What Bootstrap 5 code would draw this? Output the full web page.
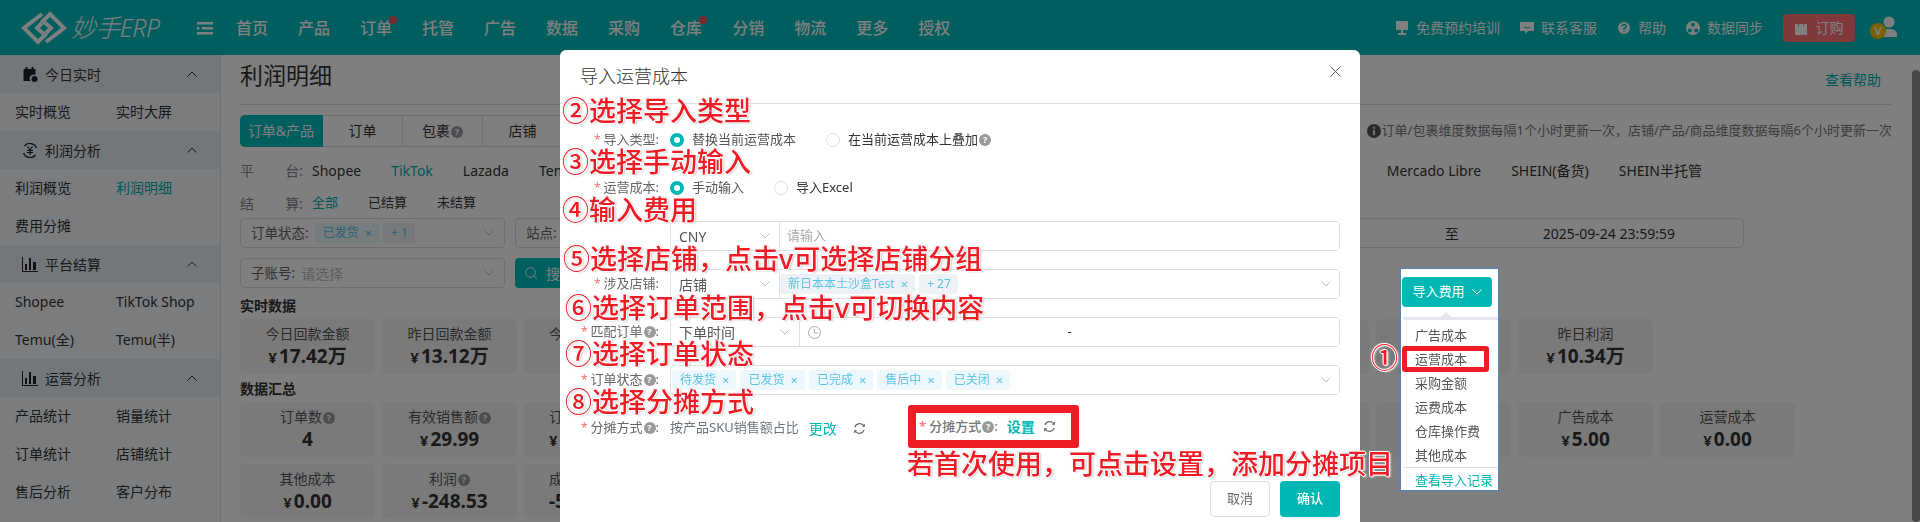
<!DOCTYPE html>
<html lang="zh-CN">
<head>
<meta charset="utf-8">
<title>利润明细</title>
<link href="https://cdn.jsdelivr.net/npm/bootstrap@5.3.0/dist/css/bootstrap.min.css" rel="stylesheet">
<style>
html,body{height:522px;overflow:hidden}
body{font-family:"Noto Sans","Noto Sans CJK SC",sans-serif;font-size:14px;color:#333;background:#fff}
.ms-top{height:55px;background:#00bcbc;color:#fff;padding:0}
.ms-logo{width:48px;height:34px;margin-left:20px}
.ms-logotext{font-size:25px;font-style:italic;margin-left:3px;font-weight:300;width:90px;line-height:1;white-space:nowrap;letter-spacing:-.6px}
.ms-burger{width:16px;height:14px;margin-left:36px}
.ms-menu{gap:30px;margin-left:23px;font-size:16px;font-weight:500}
.ms-menu span{position:relative}
.ms-dot::after{content:"";position:absolute;right:-5px;top:0;width:8px;height:8px;border-radius:50%;background:#f5545c}
.ms-tools{font-size:14px}
.ms-tool{display:flex;align-items:center;gap:7px;margin-right:20px}
.ms-tool svg{width:14px;height:14px}
.ms-buy{width:72px;height:28px;background:#ff7378;border-radius:4px;color:#fff;font-size:14px;gap:9px}
.ms-user{width:27px;height:24px;position:relative;margin:0 23px 0 15px}
.ms-vip{position:absolute;left:0;top:7px;width:16px;height:16px;border-radius:50%;background:#f6c300;color:#fff;font-size:11px;font-weight:700;line-height:16px;text-align:center}
.ms-wrap{height:467px}
.ms-side{width:221px;flex:none;background:#f6f8fb;border-right:1px solid #ddd;height:467px;overflow:hidden}
.ms-group{height:38px;background:#e9eef4;padding:0 23px 0 22px;gap:7px;font-size:14px}
.ms-group svg.ico{width:16px;height:15px}
.ms-chev{margin-left:auto;width:10px;height:6px}
.ms-links{display:grid;grid-template-columns:101px 100px;padding-left:15px}
.ms-links div{height:38px;line-height:38px;white-space:nowrap}
.ms-on,.ms-teal{color:#00aeae}
.ms-main{margin-left:19px;width:1652px;flex:none}
.ms-title{height:50px;border-bottom:1px solid #ddd;margin-bottom:10px}
.ms-title h1{font-size:23px;font-weight:400;margin:0;padding-top:7px}
.ms-help{padding:14px 11px 0 0}
.ms-tabs{height:32px}
.ms-tab{width:80px;height:32px;border:1px solid #ddd;border-left:0;line-height:30px;text-align:center;font-size:14px}
.ms-tab:first-child{background:#00bcbc;color:#fff;border-color:#00bcbc;border-radius:5px 0 0 5px;width:83px}
.ms-note{color:#777;margin-left:auto;font-size:13px}
.ms-info{width:14px;height:14px;margin-right:1px}
.ms-plat{height:32px;margin-top:7px;align-items:center}
.ms-lab{width:72px;color:#888;display:flex;justify-content:space-between;padding-right:9px;flex:none;font-size:14px}
.ms-plat a{margin-right:30px;color:inherit;text-decoration:none}
.ms-plat a.ms-teal{color:#00aeae}
.ms-rightplat{margin-left:auto;padding-right:160px;display:flex}
.ms-settle{height:26px;margin-top:4px;font-size:13px;align-items:center}
.ms-settle .ms-i{margin-right:30px}
.ms-filter{height:30px;border:1px solid #ddd;border-radius:4px;display:flex;align-items:center;padding:0 10px;width:265px;flex:none;background:#fff;white-space:nowrap}
.ms-flab{color:#666;margin-right:6px;font-size:13.500px}
.ms-fchev{width:10px;height:6px;margin-left:auto;flex:none}
.ms-ftags{gap:4px}
.ms-tag{background:#ecf8fc;color:#5cc3e4;font-size:12px;height:20px;line-height:20px;padding:0 7px 0 8px;border-radius:3px;white-space:nowrap;display:inline-flex;gap:6px}
.ms-tag u{text-decoration:none;font-size:13px}
.ms-tag.ms-gray{background:#eef1f5}
.ms-fdate{flex:1;margin-right:148px;justify-content:flex-end;padding-right:68px;width:auto;overflow:hidden}
.ms-fdate .ms-gapa{margin:0 84px 0 86px}
.ms-row1{gap:10px;margin-top:2px}
.ms-row2{gap:10px;margin-top:10px}
.ms-search{width:100px;height:30px;background:#00bcbc;color:#fff;border-radius:4px;display:flex;align-items:center;padding-left:10px;gap:9px}
.ms-h{font-weight:700;font-size:14px;height:20px;line-height:20px}
.ms-h1{margin-top:8px;margin-bottom:3px}
.ms-h2{margin-top:5px;margin-bottom:3px}
.ms-cards{display:grid;grid-template-columns:repeat(11,135px);column-gap:7px}
.ms-next{margin-top:7px}
.ms-card{height:55px;background:#f5f5f5;border-radius:5px;text-align:center;padding-top:5px;white-space:nowrap;overflow:hidden}
.ms-card b{display:block;font-size:19px;line-height:24px;color:#333}
.ms-card i{font-style:normal;font-size:15px;margin-right:2px}
.ms-ct{color:#555;line-height:20px;font-size:14px}
.ms-card.ms-cut{text-align:left;padding-left:25px}
.ms-q{display:inline-flex;width:12px;height:12px;border-radius:50%;background:#999;color:#fff;font-size:9px;font-weight:700;align-items:center;justify-content:center;vertical-align:1px;line-height:1;margin-left:1px}
.ms-scroll{position:absolute;left:1912px;top:15px;width:8px;height:452px;background:#919191;border-radius:4px}
.ms-mask{position:fixed;inset:0;background:rgba(0,0,0,.5);z-index:10}
.ms-modal{position:absolute;left:560px;top:50px;width:800px;height:520px;z-index:20;border:0;border-radius:6px;font-size:13px;background:#fff}
.ms-modal .modal-header{height:54px;padding:0 20px;border-bottom:1px solid #dcdfe6;align-items:center}
.ms-modal .modal-title{font-size:18px;font-weight:300;color:#333;margin-top:0;line-height:1.5}
.ms-x{width:11px;height:11px;margin-top:-10px;margin-right:-1px}
.ms-modal .modal-body{padding:21px 20px 0;flex:none;height:377px}
.ms-frow{height:30px;margin-bottom:18px;display:flex;align-items:center}
.ms-flabel{width:90px;flex:none;text-align:right;padding-right:11px;color:#666;white-space:nowrap}
.ms-flabel em{color:#f56c6c;font-style:normal;margin-right:3px;font-size:12px}
.ms-radio{width:14px;height:14px;border-radius:50%;border:1px solid #dcdfe6;display:inline-block;margin-right:8px;background:#fff;flex:none}
.ms-radio.ms-chk{border:4px solid #00b7b3}
.ms-rtxt{margin-right:30px;color:#555}
.ms-box{flex:1;height:30px;border:1px solid #dcdfe6;border-radius:4px;display:flex;align-items:center;background:#fff;min-width:0}
.ms-boxtags{padding-left:1px}
.ms-sel{height:28px;display:flex;align-items:center;padding:0 9px 0 8px;border-right:1px solid #dcdfe6;flex:none;color:#555;font-size:14px}
.ms-sel.ms-s1{width:109px}
.ms-sel.ms-s2{width:129px}
.ms-ph{color:#aaa;padding-left:7px}
.ms-dash{flex:1;text-align:center;padding-right:21px}
.ms-change{color:#00b7b3;font-size:14px;margin-left:10px}
.ms-modal .modal-footer{border:0;padding:0 20px;gap:10px;justify-content:flex-end;flex-wrap:nowrap}
.ms-modal .modal-footer .btn{width:60px;height:36px;margin:0;font-size:13px;padding:0;border-radius:4px}
.ms-cancel{border:1px solid #dcdfe6;color:#666;background:#fff}
.ms-ok{background:#00b7b3;color:#fff;border:0;font-weight:500}
.ms-note-a{position:absolute;z-index:30;font-size:27px;line-height:28px;font-weight:500;color:#ee1c25;white-space:nowrap;
  text-shadow:1px 0 #fff,-1px 0 #fff,0 1px #fff,0 -1px #fff,1px 1px 1px #ddd,-1px -1px 1px #ddd,2px 1px 2px #ccc}
.ms-redbox{position:absolute;z-index:30;border:8px solid #ee1c25;border-radius:3px;background:#fff;left:908px;top:405px;width:171px;height:43px;display:flex;align-items:center;padding-left:3px;color:#777;font-weight:500;white-space:nowrap;font-size:13px}
.ms-redbox em{color:#f56c6c;font-style:normal;margin-right:3px}
.ms-redbox strong{color:#00b7b3;font-weight:600;font-size:14px;margin-left:9px}
.ms-pop{position:absolute;z-index:25;left:1401px;top:269px;width:97px;height:221px;background:#fff;box-shadow:0 0 1px 1px #5b82b8;padding-top:8px;overflow:hidden;font-size:13px;color:#555}
.ms-popbtn{width:90px;height:30px;margin-left:1px;background:#00b7b3;color:#fff;border:0;border-radius:4px;font-size:13px;padding:0;display:flex;align-items:center;justify-content:center;gap:7px}
.ms-popmenu{margin:10px 0 0 2px;border-top:3px solid #e4e7ed;padding:3px 0 0;position:relative}
.ms-popmenu::before{content:"";position:absolute;left:38px;top:-8px;border:5px solid transparent;border-top:0;border-bottom-color:#e4e7ed}
.ms-popmenu div{height:24px;line-height:24px;padding-left:12px;white-space:nowrap}
.ms-popmenu .ms-last{border-top:1px solid #dcdfe6;color:#00b7b3}
.ms-redpop{position:absolute;z-index:30;left:1402px;top:346px;width:87px;height:26px;border:5px solid #ee1c25;border-radius:3px}
</style>
</head>
<body>
<svg width="0" height="0" class="position-absolute">
  <symbol id="chev" viewBox="0 0 10 6"><path d="M.5.5 5 5 9.500.500" fill="none" stroke="#bbb" stroke-width="1"/></symbol>
  <symbol id="up" viewBox="0 0 10 6"><path d="M.5 5.500 5 1l4.500 4.500" fill="none" stroke="#333" stroke-width="1"/></symbol>
  <symbol id="bars" viewBox="0 0 16 15"><path d="M1 0v14h15v1H0V0zM3 7h2v6H3zM7 1h2v12H7zM11 5h3v8h-3z" fill="#222"/></symbol>
  <symbol id="refresh" viewBox="0 0 14 14"><path d="M2 5.500A5.500 5.500 0 0 1 12 4.500M12 8.500A5.500 5.500 0 0 1 2 9.500" fill="none" stroke="#666" stroke-width="1.300"/><path d="M12.800 1.500v3.500H9.500zM1.200 12.500V9h3.300z" fill="#666"/></symbol>
</svg>

<nav class="navbar ms-top flex-nowrap justify-content-start align-items-center">
  <svg class="ms-logo" viewBox="0 0 48 34"><g fill="none" stroke="#fff" stroke-width="4"><path id="lg" d="M22 3 4 17l14 14 7-7-8-7 5-5"/><path d="M26 31 44 17 30 3l-7 7 8 7-5 5"/></g></svg>
  <span class="ms-logotext">妙手ERP</span>
  <svg class="ms-burger" viewBox="0 0 16 14"><path d="M0 1h16v2.500H0zM5 6h11v2.500H5zM0 11h16v2.500H0zM0 5l3 2.200L0 9.500z" fill="#fff"/></svg>
  <div class="d-flex ms-menu">
    <span>首页</span><span>产品</span><span class="ms-dot">订单</span><span>托管</span><span>广告</span><span>数据</span><span>采购</span><span class="ms-dot">仓库</span><span>分销</span><span>物流</span><span>更多</span><span>授权</span>
  </div>
  <div class="d-flex align-items-center ms-auto ms-tools">
    <span class="ms-tool"><svg viewBox="0 0 14 14"><path d="M1 0h12v9H1zM6 9h2v3h3v2H3v-2h3z" fill="#fff"/></svg>免费预约培训</span>
    <span class="ms-tool"><svg viewBox="0 0 14 14"><path d="M0 1h14v9H8l-3 3v-3H0z" fill="#fff"/><path d="M4 6q3 2 6 0" stroke="#00bcbc" fill="none"/></svg>联系客服</span>
    <span class="ms-tool"><svg viewBox="0 0 14 14"><circle cx="7" cy="7" r="6" fill="#fff"/><path d="M5 5.500a2 2 0 1 1 2 2V9M7 10v1.200" fill="none" stroke="#00bcbc" stroke-width="1.300"/></svg>帮助</span>
    <span class="ms-tool"><svg viewBox="0 0 14 14"><circle cx="7" cy="7" r="7" fill="#fff"/><circle cx="7" cy="3.800" r="2" fill="#00bcbc"/><circle cx="3.800" cy="9.500" r="2" fill="#00bcbc"/><circle cx="10.200" cy="9.500" r="2" fill="#00bcbc"/></svg>数据同步</span>
    <span class="ms-buy d-flex align-items-center justify-content-center"><svg width="12" height="14" viewBox="0 0 12 14"><path d="M0 3h12v11H0z" fill="#fff"/><path d="M3.500 5V2.500a2.500 2.500 0 0 1 5 0V5" fill="none" stroke="#ff7378"/></svg>订购</span>
    <span class="ms-user"><svg width="27" height="24" viewBox="0 0 27 24"><circle cx="19" cy="6" r="5.500" fill="#fff"/><path d="M10 21c0-6 4-8 9-8s8 2 8 5v3z" fill="#fff"/></svg><span class="ms-vip">V</span></span>
  </div>
</nav>

<div class="d-flex ms-wrap position-relative">
  <aside class="ms-side">
    <div class="d-flex align-items-center ms-group"><svg class="ico" viewBox="0 0 15 15"><path d="M1 2h2V0h2v2h4V0h2v2h2v6a4 4 0 0 0-5 6H1z" fill="#222"/><circle cx="12" cy="12" r="3" fill="#222"/></svg>今日实时<svg class="ms-chev"><use href="#up"/></svg></div>
    <div class="ms-links"><div>实时概览</div><div>实时大屏</div></div>
    <div class="d-flex align-items-center ms-group"><svg class="ico" viewBox="0 0 15 15"><path d="M2 3a7 7 0 0 1 12 2M13 12a7 7 0 0 1-12-2" fill="none" stroke="#222" stroke-width="1.300"/><path d="M5 3.500 7.500 7 10 3.500M4.500 7.500h6M4.500 9.500h6M7.500 7v5" fill="none" stroke="#222" stroke-width="1.200"/></svg>利润分析<svg class="ms-chev"><use href="#up"/></svg></div>
    <div class="ms-links"><div>利润概览</div><div class="ms-on">利润明细</div><div>费用分摊</div></div>
    <div class="d-flex align-items-center ms-group"><svg class="ico"><use href="#bars"/></svg>平台结算<svg class="ms-chev"><use href="#up"/></svg></div>
    <div class="ms-links"><div>Shopee</div><div>TikTok Shop</div><div>Temu(全)</div><div>Temu(半)</div></div>
    <div class="d-flex align-items-center ms-group"><svg class="ico"><use href="#bars"/></svg>运营分析<svg class="ms-chev"><use href="#up"/></svg></div>
    <div class="ms-links"><div>产品统计</div><div>销量统计</div><div>订单统计</div><div>店铺统计</div><div>售后分析</div><div>客户分布</div></div>
  </aside>
  <main class="ms-main">
    <div class="d-flex justify-content-between ms-title"><h1>利润明细</h1><span class="ms-teal ms-help">查看帮助</span></div>
    <div class="d-flex align-items-center ms-tabs">
      <div class="ms-tab">订单&amp;产品</div><div class="ms-tab">订单</div><div class="ms-tab">包裹<span class="ms-q">?</span></div><div class="ms-tab">店铺</div>
      <span class="ms-note d-flex align-items-center"><svg class="ms-info" viewBox="0 0 13 13"><circle cx="6.500" cy="6.500" r="6.500" fill="#555"/><path d="M5.500 2.500h2v2h-2zM5.500 5.500h2v5h-2z" fill="#ddd"/></svg>订单/包裹维度数据每隔1个小时更新一次，店铺/产品/商品维度数据每隔6个小时更新一次</span>
    </div>
    <div class="d-flex ms-plat">
      <span class="ms-lab"><span>平</span><span>台:</span></span>
      <a href="#">Shopee</a><a href="#" class="ms-teal">TikTok</a><a href="#">Lazada</a><a href="#">Temu</a>
      <span class="ms-rightplat"><a href="#">Mercado Libre</a><a href="#">SHEIN(备货)</a><a href="#">SHEIN半托管</a></span>
    </div>
    <div class="d-flex ms-settle">
      <span class="ms-lab"><span>结</span><span>算:</span></span>
      <span class="ms-i ms-teal">全部</span><span class="ms-i">已结算</span><span class="ms-i">未结算</span>
    </div>
    <div class="d-flex ms-row1">
      <div class="ms-filter"><span class="ms-flab">订单状态:</span><span class="d-flex ms-ftags"><span class="ms-tag">已发货<u>×</u></span><span class="ms-tag ms-gray">+ 1</span></span><svg class="ms-fchev"><use href="#chev"/></svg></div>
      <div class="ms-filter"><span class="ms-flab">站点:</span></div>
      <div class="ms-filter ms-fdate"><span>2025-09-24 00:00:00</span><span class="ms-gapa">至</span><span>2025-09-24 23:59:59</span></div>
    </div>
    <div class="d-flex ms-row2">
      <div class="ms-filter"><span class="ms-flab">子账号:</span><span class="text-secondary opacity-50">请选择</span><svg class="ms-fchev"><use href="#chev"/></svg></div>
      <div class="ms-search"><svg width="12" height="12" viewBox="0 0 12 12"><circle cx="5.500" cy="5.500" r="4.800" fill="none" stroke="#fff"/><path d="M9 9l3 3" stroke="#fff"/></svg>搜索</div>
    </div>
    <div class="ms-h ms-h1">实时数据</div>
    <div class="ms-cards">
      <div class="ms-card"><div class="ms-ct">今日回款金额</div><b><i>¥</i>17.42万</b></div>
      <div class="ms-card"><div class="ms-ct">昨日回款金额</div><b><i>¥</i>13.12万</b></div>
      <div class="ms-card ms-cut"><div class="ms-ct">今</div></div>
      <div class="ms-card"></div><div class="ms-card"></div><div class="ms-card"></div><div class="ms-card"></div><div class="ms-card"></div>
      <div class="ms-card"></div>
      <div class="ms-card"><div class="ms-ct">昨日利润</div><b><i>¥</i>10.34万</b></div>
    </div>
    <div class="ms-h ms-h2">数据汇总</div>
    <div class="ms-cards">
      <div class="ms-card"><div class="ms-ct">订单数<span class="ms-q">?</span></div><b>4</b></div>
      <div class="ms-card"><div class="ms-ct">有效销售额<span class="ms-q">?</span></div><b><i>¥</i>29.99</b></div>
      <div class="ms-card ms-cut"><div class="ms-ct">订</div><b><i>¥</i></b></div>
      <div class="ms-card"></div><div class="ms-card"></div><div class="ms-card"></div><div class="ms-card"></div><div class="ms-card"></div>
      <div class="ms-card"></div>
      <div class="ms-card"><div class="ms-ct">广告成本</div><b><i>¥</i>5.00</b></div>
      <div class="ms-card"><div class="ms-ct">运营成本</div><b><i>¥</i>0.00</b></div>
    </div>
    <div class="ms-cards ms-next">
      <div class="ms-card"><div class="ms-ct">其他成本</div><b><i>¥</i>0.00</b></div>
      <div class="ms-card"><div class="ms-ct">利润<span class="ms-q">?</span></div><b><i>¥</i>-248.53</b></div>
      <div class="ms-card ms-cut"><div class="ms-ct">成</div><b>-5</b></div>
    </div>
  </main>
  <div class="ms-scroll"></div>
</div>

<div class="ms-mask"></div>

<div class="modal-content ms-modal">
  <div class="modal-header">
    <h5 class="modal-title">导入运营成本</h5>
    <svg class="ms-x ms-auto" viewBox="0 0 11 11"><path d="M.5.500l10 10M10.500.500l-10 10" stroke="#555" fill="none"/></svg>
  </div>
  <div class="modal-body">
    <div class="ms-frow"><span class="ms-flabel"><em>*</em>导入类型:</span><span class="ms-radio ms-chk"></span><span class="ms-rtxt">替换当前运营成本</span><span class="ms-radio"></span><span>在当前运营成本上叠加<span class="ms-q">?</span></span></div>
    <div class="ms-frow"><span class="ms-flabel"><em>*</em>运营成本:</span><span class="ms-radio ms-chk"></span><span class="ms-rtxt">手动输入</span><span class="ms-radio"></span><span>导入Excel</span></div>
    <div class="ms-frow"><span class="ms-flabel"></span><div class="ms-box"><span class="ms-sel ms-s1">CNY<svg class="ms-fchev"><use href="#chev"/></svg></span><span class="ms-ph">请输入</span></div></div>
    <div class="ms-frow"><span class="ms-flabel"><em>*</em>涉及店铺:</span><div class="ms-box"><span class="ms-sel ms-s1">店铺<svg class="ms-fchev"><use href="#chev"/></svg></span><span class="d-flex ms-ftags"><span class="ms-tag ms-gray">新日本本土沙盒Test<u>×</u></span><span class="ms-tag ms-gray">+ 27</span></span><svg class="ms-fchev me-2"><use href="#chev"/></svg></div></div>
    <div class="ms-frow"><span class="ms-flabel"><em>*</em>匹配订单<span class="ms-q">?</span>:</span><div class="ms-box"><span class="ms-sel ms-s2">下单时间<svg class="ms-fchev"><use href="#chev"/></svg></span><svg class="ms-2" width="13" height="13" viewBox="0 0 13 13"><circle cx="6.500" cy="6.500" r="6" fill="none" stroke="#aaa"/><path d="M6.500 3v4H10" fill="none" stroke="#aaa"/></svg><span class="ms-dash">-</span></div></div>
    <div class="ms-frow"><span class="ms-flabel"><em>*</em>订单状态<span class="ms-q">?</span>:</span><div class="ms-box ms-boxtags"><span class="d-flex ms-ftags"><span class="ms-tag">待发货<u>×</u></span><span class="ms-tag">已发货<u>×</u></span><span class="ms-tag">已完成<u>×</u></span><span class="ms-tag">售后中<u>×</u></span><span class="ms-tag">已关闭<u>×</u></span></span><svg class="ms-fchev me-2"><use href="#chev"/></svg></div></div>
    <div class="ms-frow"><span class="ms-flabel"><em>*</em>分摊方式<span class="ms-q">?</span>:</span><span class="text-secondary">按产品SKU销售额占比</span><span class="ms-change">更改</span><svg class="ms-3" width="13" height="13"><use href="#refresh"/></svg></div>
  </div>
  <div class="modal-footer"><button class="btn ms-cancel">取消</button><button class="btn ms-ok">确认</button></div>
</div>

<div class="ms-pop">
  <button class="ms-popbtn">导入费用<svg width="10" height="6"><path d="M.5.500 5 5 9.500.500" fill="none" stroke="#fff"/></svg></button>
  <div class="ms-popmenu"><div>广告成本</div><div>运营成本</div><div>采购金额</div><div>运费成本</div><div>仓库操作费</div><div>其他成本</div><div class="ms-last">查看导入记录</div></div>
</div>
<div class="ms-redpop"></div>

<div class="ms-redbox"><em>*</em>分摊方式<span class="ms-q">?</span>:<strong>设置</strong><svg class="ms-2" width="13" height="13"><use href="#refresh"/></svg></div>

<div class="ms-note-a" style="left:562px;top:97px">②选择导入类型</div>
<div class="ms-note-a" style="left:562px;top:148px">③选择手动输入</div>
<div class="ms-note-a" style="left:562px;top:196px">④输入费用</div>
<div class="ms-note-a" style="left:563px;top:245px">⑤选择店铺，点击v可选择店铺分组</div>
<div class="ms-note-a" style="left:565px;top:294px">⑥选择订单范围，点击v可切换内容</div>
<div class="ms-note-a" style="left:565px;top:340px">⑦选择订单状态</div>
<div class="ms-note-a" style="left:565px;top:388px">⑧选择分摊方式</div>
<div class="ms-note-a" style="left:907px;top:450px">若首次使用，可点击设置，添加分摊项目</div>
<div class="ms-note-a" style="left:1371px;top:344px">①</div>

<script src="https://cdn.jsdelivr.net/npm/bootstrap@5.3.0/dist/js/bootstrap.bundle.min.js"></script>
</body>
</html>
